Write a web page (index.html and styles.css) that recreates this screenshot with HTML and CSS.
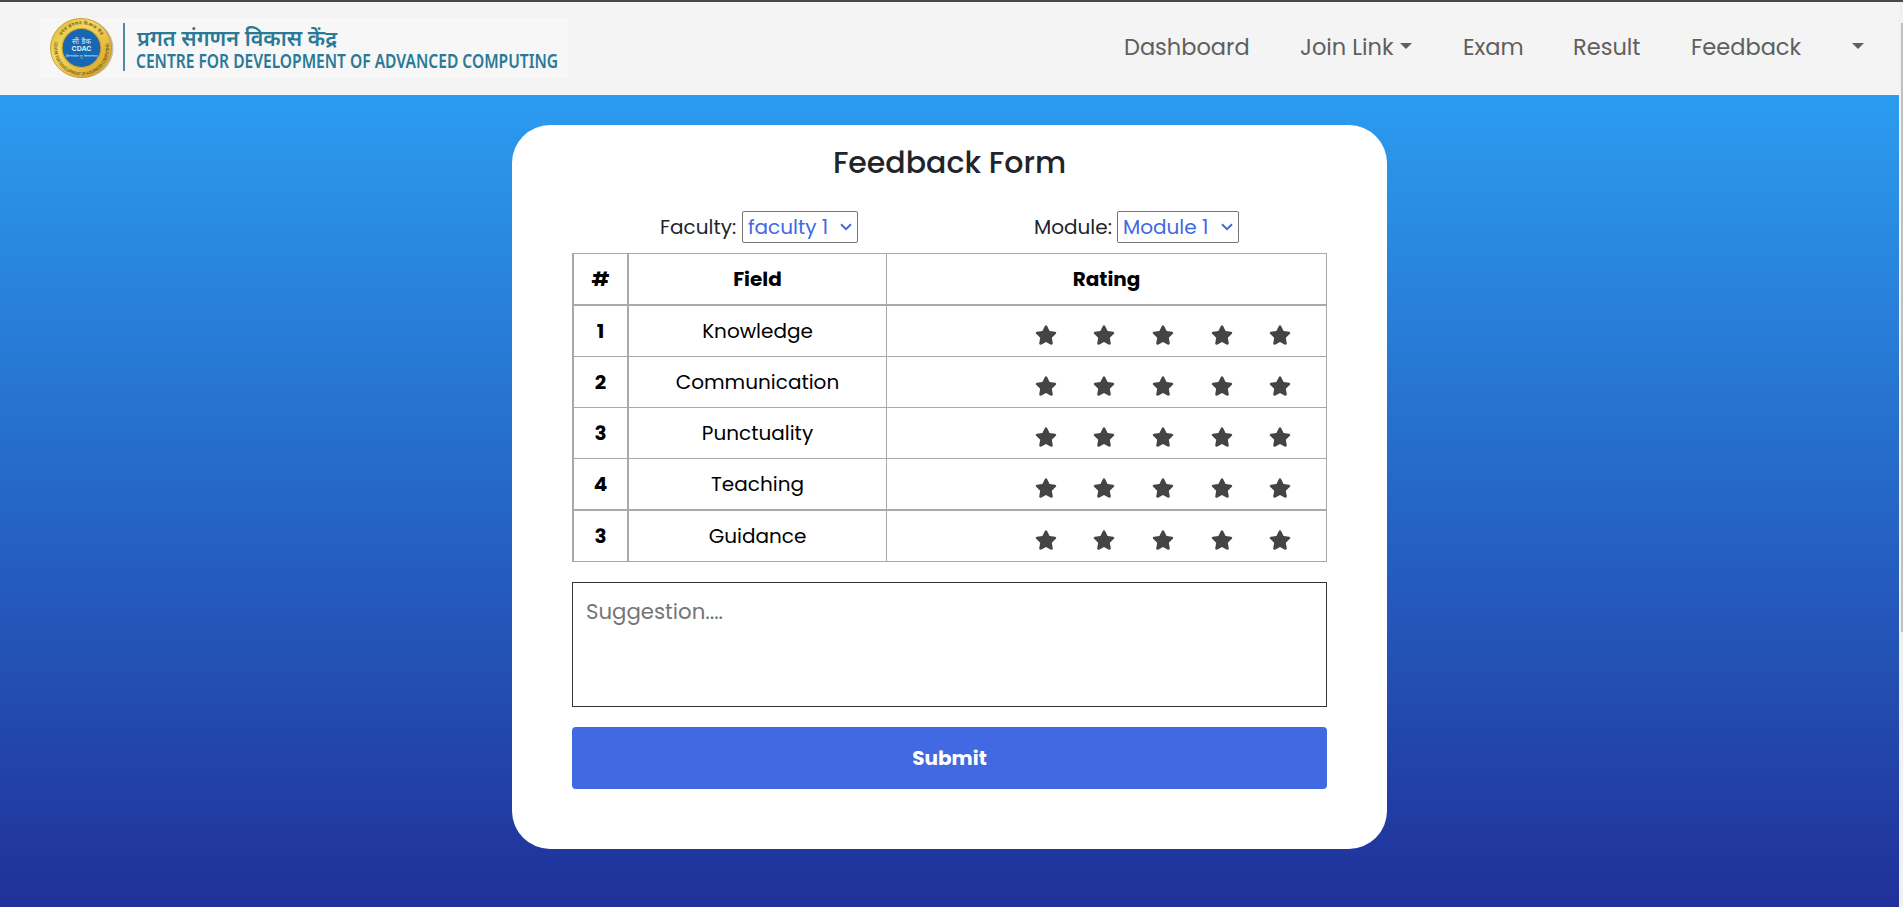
FILE: index.html
```html
<!DOCTYPE html>
<html lang="en">
<head>
<meta charset="utf-8">
<title>Feedback Form</title>
<link rel="stylesheet" href="styles.css">
</head>
<body>
<svg class="defs" width="0" height="0" aria-hidden="true">
  <symbol id="star" viewBox="0 0 576 512"><path d="M259.3 17.8 194 150.200 47.900 171.500c-26.200 3.800-36.700 36.100-17.700 54.600l105.700 103-25 145.500c-4.500 26.300 23.200 46 46.400 33.700L288 439.600l130.700 68.700c23.200 12.200 50.900-7.400 46.400-33.700l-25-145.500 105.700-103c19-18.500 8.500-50.800-17.700-54.600L382 150.200 316.700 17.800c-11.700-23.600-45.600-23.900-57.400 0z"/></symbol>
</svg>
<div class="window">
  <div class="page">
    <header class="navbar">
      <svg class="logo" width="528" height="60" viewBox="0 0 528 60">
        <defs>
          <linearGradient id="gold" x1="0" y1="0" x2="1" y2="1"><stop offset="0" stop-color="#dcae2c"/><stop offset=".35" stop-color="#f3dc60"/><stop offset="1" stop-color="#d69a20"/></linearGradient>
          <path id="ringTop" d="M18 30a23.500 23.500 0 0 1 47 0"/>
          <path id="ringBottom" d="M15.500 21a27.500 27.500 0 1 0 52 0"/>
        </defs>
        <rect width="528" height="60" fill="#f6f7f6"/>
        <ellipse cx="43" cy="30.500" rx="30.500" ry="29.500" fill="#b5aa90" opacity=".7"/>
        <ellipse cx="41" cy="30" rx="30.500" ry="29.500" fill="url(#gold)" stroke="#b9902c" stroke-width=".8"/>
        <circle cx="41.500" cy="30" r="19.500" fill="#1767b3" stroke="#d9a72c" stroke-width="1.200"/>
        <text class="ring"><textPath href="#ringTop" startOffset="13" textLength="47">प्रगत संगणन विकास केंद्र</textPath></text>
        <text class="ring"><textPath href="#ringBottom" startOffset="3" textLength="97" lengthAdjust="spacingAndGlyphs">CENTRE FOR DEVELOPMENT OF ADVANCED COMPUTING</textPath></text>
        <text class="seal" x="41.500" y="25.500" font-size="7.500">सी डैक</text>
        <text class="seal" x="41.500" y="33" font-size="6.500" font-weight="700" textLength="20" lengthAdjust="spacingAndGlyphs">CDAC</text>
        <text class="seal" x="41.500" y="38.500" font-size="3.800" textLength="32" lengthAdjust="spacingAndGlyphs">ज्ञानादेव तु कैवल्यम्</text>
        <rect x="83" y="5" width="2" height="48" fill="#4d8ba3"/>
        <text class="name" x="97" y="27.500" font-size="22" textLength="200" lengthAdjust="spacingAndGlyphs">प्रगत संगणन विकास केंद्र</text>
        <text class="name" x="96" y="50" font-size="19.200" textLength="422" lengthAdjust="spacingAndGlyphs">CENTRE FOR DEVELOPMENT OF ADVANCED COMPUTING</text>
      </svg>
      <nav class="nav">
        <a class="n1">Dashboard</a>
        <a class="n2">Join Link<i class="caret"></i></a>
        <a class="n3">Exam</a>
        <a class="n4">Result</a>
        <a class="n5">Feedback</a>
        <a class="n6"><i class="caret"></i></a>
      </nav>
    </header>
    <main class="backdrop">
      <form class="card">
        <h1>Feedback Form</h1>
        <div class="filters">
          <label class="faculty"><span>Faculty:</span><span class="select"><b>faculty 1</b><svg width="12" height="8" viewBox="0 0 12 8"><path d="M1 1.200 6 6.200 11 1.200"/></svg></span></label>
          <label class="module"><span>Module:</span><span class="select"><b>Module 1</b><svg width="12" height="8" viewBox="0 0 12 8"><path d="M1 1.200 6 6.200 11 1.200"/></svg></span></label>
        </div>
        <div class="table">
          <div class="row thick head"><div>#</div><div>Field</div><div>Rating</div></div>
          <div class="row"><div>1</div><div>Knowledge</div><div class="stars"><svg><use href="#star"/></svg><svg><use href="#star"/></svg><svg><use href="#star"/></svg><svg><use href="#star"/></svg><svg><use href="#star"/></svg></div></div>
          <div class="row"><div>2</div><div>Communication</div><div class="stars"><svg><use href="#star"/></svg><svg><use href="#star"/></svg><svg><use href="#star"/></svg><svg><use href="#star"/></svg><svg><use href="#star"/></svg></div></div>
          <div class="row"><div>3</div><div>Punctuality</div><div class="stars"><svg><use href="#star"/></svg><svg><use href="#star"/></svg><svg><use href="#star"/></svg><svg><use href="#star"/></svg><svg><use href="#star"/></svg></div></div>
          <div class="row thick"><div>4</div><div>Teaching</div><div class="stars"><svg><use href="#star"/></svg><svg><use href="#star"/></svg><svg><use href="#star"/></svg><svg><use href="#star"/></svg><svg><use href="#star"/></svg></div></div>
          <div class="row"><div>3</div><div>Guidance</div><div class="stars"><svg><use href="#star"/></svg><svg><use href="#star"/></svg><svg><use href="#star"/></svg><svg><use href="#star"/></svg><svg><use href="#star"/></svg></div></div>
        </div>
        <div class="suggestion"><span>Suggestion....</span></div>
        <div class="submit">Submit</div>
      </form>
    </main>
  </div>
  <div class="scrollbar"><div class="thumb"></div></div>
</div>
</body>
</html>
```
FILE: styles.css
```css
* { box-sizing: border-box; }
body { margin: 0; overflow: hidden; font-family: Poppins, Inter, "Noto Sans", sans-serif; font-size: 20px; color: #212529; }
.defs { display: block; height: 0; }
.window { display: flex; height: 907px; border-top: 2px solid #4a4848; }
.page { width: 1899px; display: flex; flex-direction: column; }
.navbar { height: 93px; background: #f4f4f4; display: flex; justify-content: space-between; padding: 16px 35px 0 40px; }
.logo { flex: none; }
.logo .name { font-family: "Noto Sans", "Open Sans", sans-serif; font-weight: 600; fill: #2a7996; }
.logo .ring { font: 600 4.500px "Noto Sans", sans-serif; fill: #6e5a1e; }
.logo .seal { font-family: Inter, "Noto Sans", sans-serif; fill: #d6ecf8; text-anchor: middle; }
.nav { display: flex; height: 58px; align-items: center; font-size: 22.500px; color: #5f5f5f; }
.nav a { display: flex; align-items: center; white-space: nowrap; }
.n1 { width: 176px; }
.n2 { width: 163px; }
.n3 { width: 110px; }
.n4 { width: 118px; }
.n5 { width: 161px; }
.caret { width: 0; height: 0; margin: -3px 0 0 6px; border: 6.500px solid transparent; border-top-color: #5f5f5f; border-bottom: 0; }
.n6 .caret { margin-left: 0; }
.backdrop { flex: 1; padding: 30px 512px 0; background: linear-gradient(#2b9cf0, #20309a); }
.card { width: 875px; height: 724px; padding: 19px 60px 0; border-radius: 38px; background: #fff; display: flex; flex-direction: column; }
h1 { margin: 0; text-align: center; font-size: 30px; font-weight: 500; line-height: 38px; }
.filters { display: flex; margin-top: 29px; height: 32px; }
.filters label { display: flex; align-items: center; }
.faculty { width: 373px; padding-left: 88px; }
.module { padding-left: 89px; }
.faculty > span:first-child { width: 82px; }
.module > span:first-child { width: 83px; }
.select { width: 116px; height: 32px; padding: 0 5px; border: 1px solid #767676; border-radius: 2px; display: flex; align-items: center; justify-content: space-between; color: #4169e1; white-space: nowrap; }
.module .select { width: 122px; }
.select b { font-weight: 400; }
.select path { fill: none; stroke: #4169e1; stroke-width: 2; }
.table { margin-top: 10px; border: 1px solid #a9a9a9; border-left-width: 2px; border-bottom: 0; color: #000; }
.row { display: grid; grid-template-columns: 55px 258px 439px; height: 51px; border-bottom: 1px solid #a9a9a9; }
.row.thick { height: 52px; border-bottom-width: 2px; }
.row > div { display: flex; align-items: center; justify-content: center; }
.row > div:first-child { border-right: 2px solid #a9a9a9; font-weight: 700; }
.row > div:nth-child(2) { border-right: 1px solid #a9a9a9; }
.row.head > div { font-weight: 700; }
.row > .stars { justify-content: flex-end; gap: 36.650px; padding: 8px 34.700px 0 0; }
.stars svg { width: 22px; height: 20px; fill: #444; }
.suggestion { margin-top: 20px; height: 125px; padding: 13px; border: 1px solid #333; color: #757575; font-size: 21.250px; line-height: 32px; }
.submit { margin-top: 20px; height: 62px; border-radius: 4px; background: #4169e1; color: #fff; font-weight: 700; display: flex; align-items: center; justify-content: center; }
.scrollbar { width: 4px; background: #f1f1f1; padding: 21px 0 0 2px; }
.thumb { height: 609px; background: #c1c1c1; }
```
